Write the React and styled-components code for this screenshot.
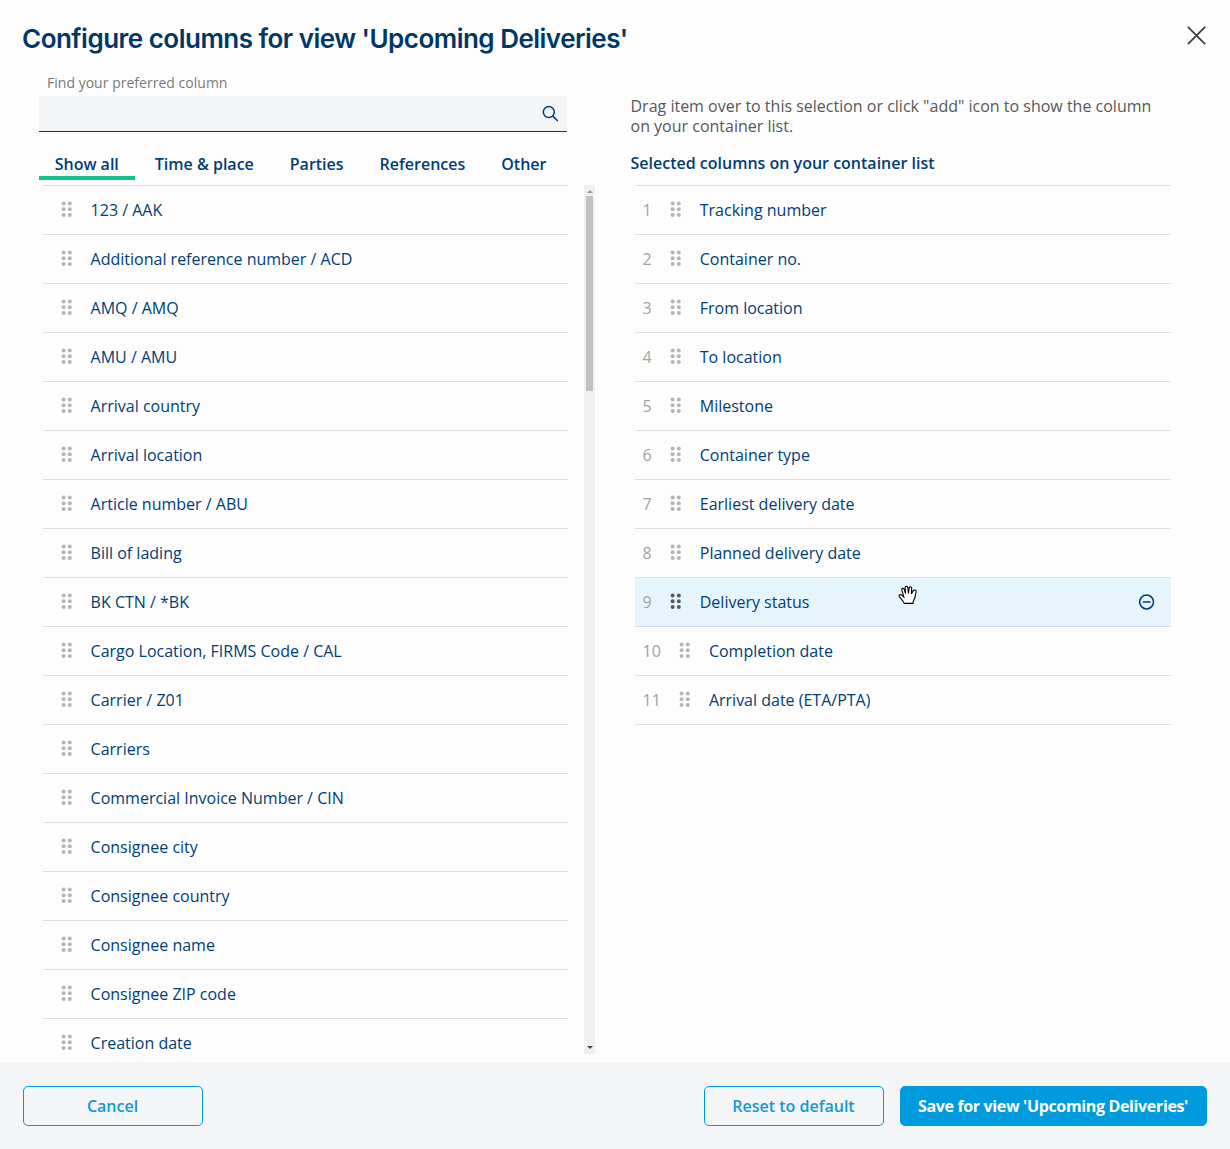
import React from "react";
import styled, { createGlobalStyle } from "styled-components";

const tabs = ["Show all", "Time & place", "Parties", "References", "Other"];

const available = [
  "123 / AAK",
  "Additional reference number / ACD",
  "AMQ / AMQ",
  "AMU / AMU",
  "Arrival country",
  "Arrival location",
  "Article number / ABU",
  "Bill of lading",
  "BK CTN / *BK",
  "Cargo Location, FIRMS Code / CAL",
  "Carrier / Z01",
  "Carriers",
  "Commercial Invoice Number / CIN",
  "Consignee city",
  "Consignee country",
  "Consignee name",
  "Consignee ZIP code",
  "Creation date",
];

const selected = [
  "Tracking number",
  "Container no.",
  "From location",
  "To location",
  "Milestone",
  "Container type",
  "Earliest delivery date",
  "Planned delivery date",
  "Delivery status",
  "Completion date",
  "Arrival date (ETA/PTA)",
];

function Grip({ dark }) {
  return (
    <GripIcon viewBox="0 0 12 17" $dark={dark}>
      {[2.5, 8.2, 13.9].map((y) => (
        <React.Fragment key={y}>
          <circle cx="2.6" cy={y} r="2" />
          <circle cx="8.8" cy={y} r="2" />
        </React.Fragment>
      ))}
    </GripIcon>
  );
}

function App() {
  return (
    <Dialog>
      <GlobalStyle />
      <Header>
        <Title>Configure columns for view 'Upcoming Deliveries'</Title>
        <CloseButton aria-label="Close">
          <svg width="20" height="20" viewBox="0 0 20 20" fill="none" stroke="#3c3c3c" strokeWidth="1.7">
            <path d="M.9 .9 18.1 18.1M18.1 .9 .9 18.1" />
          </svg>
        </CloseButton>
      </Header>
      <Content>
        <LeftColumn>
          <Label htmlFor="find">Find your preferred column</Label>
          <SearchField>
            <SearchInput id="find" />
            <svg width="17" height="17" viewBox="0 0 17 17" fill="none" stroke="#003e76" strokeWidth="1.5">
              <circle cx="6.8" cy="7.1" r="5.5" />
              <path d="M10.8 11.1 15.8 16" />
            </svg>
          </SearchField>
          <Tabs>
            {tabs.map((tab, i) => (
              <Tab key={tab} $active={i === 0}>{tab}</Tab>
            ))}
          </Tabs>
          <ScrollArea>
            <List>
              {available.map((name) => (
                <Row key={name} $left>
                  <Grip />
                  <Name>{name}</Name>
                </Row>
              ))}
            </List>
            <Scrollbar>
              <Arrow $up />
              <Thumb />
              <Arrow />
            </Scrollbar>
          </ScrollArea>
        </LeftColumn>
        <RightColumn>
          <Hint>
            Drag item over to this selection or click "add" icon to show the column on your container list.
          </Hint>
          <Subtitle>Selected columns on your container list</Subtitle>
          <SelectedList>
            {selected.map((name, i) => (
              <Row key={name} $hover={i === 8}>
                <Index>{i + 1}</Index>
                <Grip dark={i === 8} />
                <Name>{name}</Name>
                {i === 8 && (
                  <>
                    <RemoveIcon viewBox="0 0 16 16">
                      <circle cx="7.6" cy="8" r="6.9" />
                      <path d="M3.8 8h7.6" />
                    </RemoveIcon>
                    <HandCursor viewBox="0 0 20 20">
                      <path d="M6.2 18.4C5.4 16 3.2 14.2 1.4 11.9 .4 10.3 2.1 9 3.7 10.1L5.8 12 3.9 5.2C3.4 3.1 5.5 2.5 6.2 4.4L7.6 8.6 7.1 3C7 .9 9.4 .7 9.8 2.7L10.4 8.3 11.2 3.1C11.5 1.1 13.8 1.5 13.7 3.5L13.4 8.9 15.2 5.9C16.2 4.3 18.5 5.1 18.1 6.9 17.1 9.8 17.8 12 16 14.6 15.1 16 15.1 17.2 15 18.4Z" />
                    </HandCursor>
                  </>
                )}
              </Row>
            ))}
          </SelectedList>
        </RightColumn>
      </Content>
      <Footer>
        <Button>Cancel</Button>
        <Actions>
          <Button>Reset to default</Button>
          <Button $primary>Save for view 'Upcoming Deliveries'</Button>
        </Actions>
      </Footer>
    </Dialog>
  );
}

const GlobalStyle = createGlobalStyle`
  * {
    box-sizing: border-box;
  }
  body {
    margin: 0;
    background: #fdfdfd;
    font-family: "Open Sans", sans-serif;
    font-size: 16px;
    color: #003e76;
  }
`;

const Dialog = styled.div`
  height: 1149px;
  display: flex;
  flex-direction: column;
  overflow: hidden;
`;

const Header = styled.header`
  height: 74px;
  flex-shrink: 0;
  display: flex;
  justify-content: space-between;
  align-items: flex-start;
  padding: 22px 23px 0 22px;
`;

const Title = styled.h1`
  margin: 0;
  font-family: Inter, sans-serif;
  font-size: 26px;
  line-height: 34px;
  font-weight: 600;
  letter-spacing: -0.51px;
  white-space: nowrap;
  color: #003767;
`;

const CloseButton = styled.button`
  border: 0;
  padding: 0;
  background: none;
  display: flex;
  margin-top: 4px;
`;

const Content = styled.main`
  flex: 1;
  min-height: 0;
  display: flex;
  padding-left: 39px;
`;

const LeftColumn = styled.section`
  width: 556px;
  display: flex;
  flex-direction: column;
`;

const Label = styled.label`
  height: 22px;
  padding-left: 8px;
  font-size: 14px;
  line-height: 18px;
  letter-spacing: 0.02px;
  color: #7a7a7a;
`;

const SearchField = styled.div`
  width: 528px;
  height: 36px;
  flex-shrink: 0;
  display: flex;
  align-items: center;
  padding-right: 8px;
  background: #f3f5f7;
  border-bottom: 1px solid #003e76;
`;

const SearchInput = styled.input`
  flex: 1;
  border: 0;
  outline: 0;
  background: transparent;
  font: inherit;
`;

const Tabs = styled.nav`
  display: flex;
  gap: 4.6px;
  height: 53px;
  flex-shrink: 0;
  padding-top: 16px;
`;

const Tab = styled.div`
  height: 32px;
  padding: 0 15.7px;
  font-weight: 600;
  line-height: 32px;
  white-space: nowrap;
  border-bottom: 4px solid ${(props) => (props.$active ? "#10c391" : "transparent")};
`;

const ScrollArea = styled.div`
  display: flex;
  justify-content: space-between;
  height: 869px;
  padding-left: 4px;
`;

const List = styled.div`
  width: 525px;
  border-top: 1px solid #dddfe0;
  overflow: hidden;
`;

const Row = styled.div`
  height: 49px;
  position: relative;
  display: flex;
  align-items: center;
  padding: 0 16px 0 ${(props) => (props.$left ? "17.6px" : "7.6px")};
  border-bottom: 1px solid ${(props) => (props.$hover ? "#ccdbe5" : "#dddfe0")};
  background: ${(props) => (props.$hover ? "#e6f5fc" : "transparent")};
`;

const GripIcon = styled.svg`
  width: 12px;
  height: 17px;
  flex-shrink: 0;
  margin: 0 18px 2px 0;
  fill: ${(props) => (props.$dark ? "#59595b" : "#b5b5b5")};
`;

const Name = styled.span`
  flex: 1;
  white-space: nowrap;
`;

const Index = styled.span`
  margin-right: 18px;
  color: #a3a3a3;
`;

const RemoveIcon = styled.svg`
  width: 16px;
  height: 16px;
  fill: none;
  stroke: #003e76;
  stroke-width: 1.5;
`;

const HandCursor = styled.svg`
  position: absolute;
  left: 263px;
  top: 7px;
  width: 20px;
  height: 20px;
  fill: #fff;
  stroke: #000;
  stroke-width: 1.1;
`;

const Scrollbar = styled.div`
  width: 11px;
  display: flex;
  flex-direction: column;
  align-items: center;
  background: #f0f0f0;
`;

const Arrow = styled.div`
  width: 0;
  height: 0;
  border: 3px solid transparent;
  ${(props) =>
    props.$up
      ? "border-top: 0; border-bottom-color: #999; margin: 5px 0 3px;"
      : "border-bottom: 0; border-top-color: #444; margin: auto 0 5px;"}
`;

const Thumb = styled.div`
  width: 7px;
  height: 195px;
  background: #c1c1c1;
`;

const RightColumn = styled.section`
  width: 541px;
  margin-left: 35px;
  padding-top: 22px;
`;

const Hint = styled.p`
  margin: 0;
  padding-left: 0.5px;
  height: 57px;
  line-height: 20px;
  color: #585858;
`;

const Subtitle = styled.h2`
  margin: 0;
  padding-left: 0.5px;
  height: 32px;
  font-size: 16px;
  line-height: 20px;
  font-weight: 600;
`;

const SelectedList = styled.div`
  margin-left: 5px;
  border-top: 1px solid #dddfe0;
`;

const Footer = styled.footer`
  height: 87px;
  flex-shrink: 0;
  display: flex;
  justify-content: space-between;
  padding: 24px 23px 0;
  background: #f3f5f7;
`;

const Actions = styled.div`
  display: flex;
  gap: 16px;
`;

const Button = styled.button`
  width: ${(props) => (props.$primary ? "307px" : "180px")};
  height: 40px;
  padding: 0 1px 0 0;
  border: 1px solid #009bde;
  border-radius: 5px;
  background: ${(props) => (props.$primary ? "#009bde" : "transparent")};
  color: ${(props) => (props.$primary ? "#fff" : "#1299d3")};
  font: ${(props) => (props.$primary ? 700 : 600)} 16px "Open Sans", sans-serif;
  letter-spacing: ${(props) => (props.$primary ? "-0.35px" : "0")};
  white-space: nowrap;
`;

export default App;
